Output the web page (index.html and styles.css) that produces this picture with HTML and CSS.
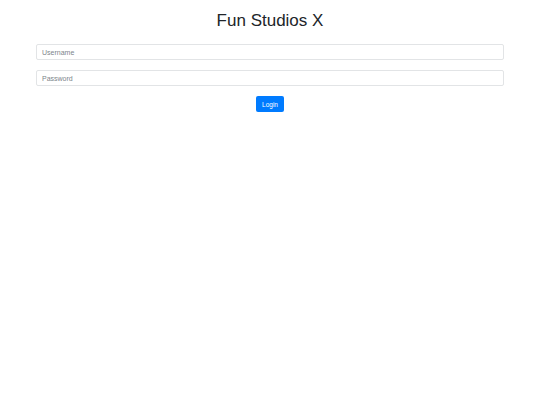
FILE: index.html
```html
<!DOCTYPE html>
<html>
<head>
<meta charset="utf-8">
<link rel="stylesheet" href="styles.css">
</head>
<body>
<div class="page">
  <h1 class="title">Fun Studios X</h1>
  <form class="login">
    <input class="field" type="text" placeholder="Username">
    <input class="field" type="password" placeholder="Password">
    <button class="btn" type="button">Login</button>
  </form>
</div>
</body>
</html>
```

FILE: styles.css
```css
html, body {
  margin: 0;
  padding: 0;
  background: #fff;
}
body {
  font-family: "Liberation Sans", Arial, sans-serif;
  color: #212529;
}
.page {
  padding: 0 36px;
}
.title {
  margin: 0;
  padding-top: 11px;
  height: 33px;
  font-size: 17px;
  font-weight: 400;
  line-height: 20px;
  text-align: center;
  box-sizing: content-box;
}
.login {
  display: flex;
  flex-direction: column;
  align-items: center;
  gap: 10px;
}
.field {
  box-sizing: border-box;
  width: 100%;
  height: 16px;
  margin: 0;
  padding: 0 5px;
  border: 1px solid #e2e4e6;
  border-radius: 2px;
  font-family: "Liberation Sans", Arial, sans-serif;
  font-size: 7px;
  color: #495057;
  outline: none;
}
.field::placeholder {
  color: #7d848b;
}
.btn {
  box-sizing: border-box;
  width: 28px;
  height: 16px;
  padding: 0;
  border: none;
  border-radius: 2px;
  background: #007bff;
  color: #fff;
  font-family: "Liberation Sans", Arial, sans-serif;
  font-size: 6.5px;
}
```
